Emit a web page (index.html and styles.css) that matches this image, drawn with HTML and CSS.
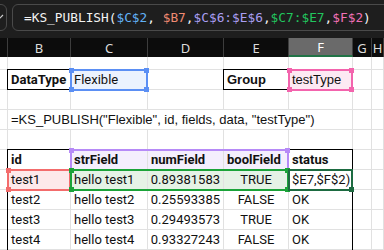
FILE: index.html
```html
<!DOCTYPE html>
<html>
<head>
<meta charset="utf-8">
<link rel="stylesheet" href="styles.css">
</head>
<body>
<div class="topbar">
  <div class="btnbox">
    <svg class="chk" width="14" height="10" viewBox="0 0 14 10"><path d="M1 5 L5 9 L13 1" fill="none" stroke="#cfcfcf" stroke-width="1.2"/></svg>
  </div>
  <div class="fbox">=KS_PUBLISH(<span class="f-blue">$C$2</span>, <span class="f-red">$B7</span>,<span class="f-purple">$C$6:$E$6</span>,<span class="f-green">$C7:$E7</span>,<span class="f-pink">$F$2</span>)</div>
</div>
<div class="sheetwrap">
<div class="sheet">
  <!-- header -->
  <div class="hd"></div><div class="hd">B</div><div class="hd">C</div><div class="hd">D</div><div class="hd">E</div><div class="hd sel">F</div><div class="hd">G</div><div class="hd">H</div>
  <!-- row 1 -->
  <div class="c"></div><div class="c"></div><div class="c"></div><div class="c"></div><div class="c"></div><div class="c"></div><div class="c"></div><div class="c"></div>
  <!-- row 2 -->
  <div class="c"></div><div class="c b">DataType</div><div class="c fill-blue">Flexible</div><div class="c"></div><div class="c b arial">Group</div><div class="c fill-pink arial">testType</div><div class="c"></div><div class="c"></div>
  <!-- row 3 -->
  <div class="c"></div><div class="c"></div><div class="c"></div><div class="c"></div><div class="c"></div><div class="c"></div><div class="c"></div><div class="c"></div>
  <!-- row 4 -->
  <div class="c"></div><div class="c arial span5">=KS_PUBLISH("Flexible", id, fields, data, "testType")</div><div class="c"></div><div class="c"></div>
  <!-- row 5 -->
  <div class="c"></div><div class="c"></div><div class="c"></div><div class="c"></div><div class="c"></div><div class="c"></div><div class="c"></div><div class="c"></div>
  <!-- row 6 -->
  <div class="c"></div><div class="c b">id</div><div class="c b fill-purple">strField</div><div class="c b fill-purple">numField</div><div class="c b fill-purple">boolField</div><div class="c b">status</div><div class="c"></div><div class="c"></div>
  <!-- row 7 -->
  <div class="c"></div><div class="c fill-red">test1</div><div class="c fill-green">hello test1</div><div class="c fill-green r">0.89381583</div><div class="c fill-green m">TRUE</div><div class="c">$E7,$F$2)</div><div class="c"></div><div class="c"></div>
  <!-- row 8 -->
  <div class="c"></div><div class="c">test2</div><div class="c">hello test2</div><div class="c r">0.25593385</div><div class="c m">FALSE</div><div class="c">OK</div><div class="c"></div><div class="c"></div>
  <!-- row 9 -->
  <div class="c"></div><div class="c">test3</div><div class="c">hello test3</div><div class="c r">0.29493573</div><div class="c m">TRUE</div><div class="c">OK</div><div class="c"></div><div class="c"></div>
  <!-- row 10 -->
  <div class="c"></div><div class="c">test4</div><div class="c">hello test4</div><div class="c r">0.93327243</div><div class="c m">FALSE</div><div class="c">OK</div><div class="c"></div><div class="c"></div>
</div>
<div class="sheet overlays">
  <div class="ov ov-black ov-b2"></div>
  <div class="ov ov-black ov-e2"></div>
  <div class="ov ov-table"></div>
  <div class="ov ov-sel ov-blue ov-c2"><i class="h tl"></i><i class="h tr"></i><i class="h bl"></i><i class="h br"></i></div>
  <div class="ov ov-sel ov-pink ov-f2"><i class="h tl"></i><i class="h tr"></i><i class="h bl"></i><i class="h br"></i></div>
  <div class="ov ov-sel ov-purple ov-c6"><i class="h tl"></i><i class="h tr"></i></div>
  <div class="ov ov-sel ov-red ov-b7"><i class="h tl"></i><i class="h bl"></i></div>
  <div class="ov ov-sel ov-green ov-c7"><i class="h tl"></i><i class="h tr"></i><i class="h bl"></i><i class="h br"></i></div>
  <div class="ov ov-sel ov-active ov-f7"><i class="h br"></i></div>
</div>
</div>
</body>
</html>
```
FILE: styles.css
```css
* { box-sizing: border-box; }
html, body { margin: 0; padding: 0; }
body {
  width: 384px;
  height: 250px;
  overflow: hidden;
  background: #fff;
  font-family: Roboto, "Liberation Sans", sans-serif;
}

/* formula bar */
.topbar {
  height: 38px;
  background: #1e1e1e;
  display: flex;
  align-items: flex-start;
  padding-top: 4px;
  gap: 5px;
  overflow: hidden;
}
.btnbox {
  flex: none;
  width: 24px;
  height: 27px;
  margin-left: -17px;
  border: 1px solid #4a4a4a;
  border-radius: 6px;
  position: relative;
}
.chk { position: absolute; left: 6px; top: 9px; }
.fbox {
  flex: none;
  width: 400px;
  height: 27px;
  border: 1px solid #4a4a4a;
  border-radius: 6px;
  background: #1e1e1e;
  font-family: "DejaVu Sans Mono", "Liberation Mono", monospace;
  font-size: 12.8px;
  line-height: 25px;
  color: #f2f2f2;
  padding-left: 11px;
  white-space: nowrap;
}
.f-blue { color: #62b1f6; }
.f-red { color: #f08a72; }
.f-purple { color: #aa9ef2; }
.f-green { color: #22c55e; }
.f-pink { color: #f171b8; }

/* sheet grid: cells and overlay layer share one area */
.sheetwrap {
  display: grid;
  height: 212px;
  overflow: hidden;
}
.sheet {
  grid-area: 1 / 1;
  display: grid;
  grid-template-columns: 8px 63px 77px 76px 65px 64px 19px 12px;
  grid-template-rows: 19px 13px repeat(9, 20px);
  height: 212px;
}
.overlays { pointer-events: none; }
.hd {
  background: #0c0c0c;
  color: #dcdcdc;
  border-right: 1px solid #3d3d3d;
  font-family: "Noto Sans", sans-serif;
  font-size: 13px;
  display: flex;
  align-items: center;
  justify-content: center;
  overflow: hidden;
}
.hd.sel {
  background: #6a6a6a;
  color: #fff;
  border-bottom: 2px solid #217346;
}
.c {
  border-right: 1px solid #e1e1e1;
  border-bottom: 1px solid #e1e1e1;
  font-size: 13px;
  color: #111;
  padding: 0 3px;
  display: flex;
  align-items: center;
  white-space: nowrap;
  overflow: hidden;
  min-width: 0;
}
.c.b { font-weight: 700; }
.c.r { justify-content: flex-end; }
.c.m { justify-content: center; }
.c.arial { font-family: "Liberation Sans", Arial, sans-serif; }
.span5 { grid-column: span 5; }

.fill-blue { background: #ebf2fe; }
.fill-pink { background: #fde9f3; }
.fill-purple { background: #f4eefd; }
.fill-red { background: #fde9ea; }
.fill-green { background: #e5f2e6; }

/* overlays */
.ov {
  position: relative;
  margin: -1px 0 0 -1px;
}
.ov-black { border: 1px solid #000; }
.ov-b2 { grid-column: 2 / 3; grid-row: 3 / 4; }
.ov-e2 { grid-column: 5 / 6; grid-row: 3 / 4; }
.ov-table {
  grid-column: 2 / 7;
  grid-row: 7 / 12;
  border: 1px solid #000;
  margin-bottom: -4px;
}
.ov-sel { border: 2px solid; margin: -1px 0 -1px -1px; }
.ov-blue { border-color: #5b8ff4; color: #5b8ff4; }
.ov-pink { border-color: #f364ad; color: #f364ad; }
.ov-purple { border-color: #b68af7; color: #b68af7; }
.ov-red { border-color: #f36c6c; color: #f36c6c; }
.ov-green { border-color: #1ba339; color: #1ba339; }
.ov-active { border-color: #1d6b41; color: #1d6b41; }
.ov-c2 { grid-column: 3 / 4; grid-row: 3 / 4; }
.ov-f2 { grid-column: 6 / 7; grid-row: 3 / 4; }
.ov-c6 { grid-column: 3 / 6; grid-row: 7 / 8; }
.ov-b7 { grid-column: 2 / 3; grid-row: 8 / 9; }
.ov-c7 { grid-column: 3 / 6; grid-row: 8 / 9; }
.ov-f7 { grid-column: 6 / 7; grid-row: 8 / 9; }

.h {
  position: absolute;
  width: 5px;
  height: 5px;
  background: currentColor;
}
.h.tl { left: -3px; top: -3px; }
.h.tr { right: -3px; top: -3px; }
.h.bl { left: -3px; bottom: -3px; }
.h.br { right: -3px; bottom: -3px; }
```
